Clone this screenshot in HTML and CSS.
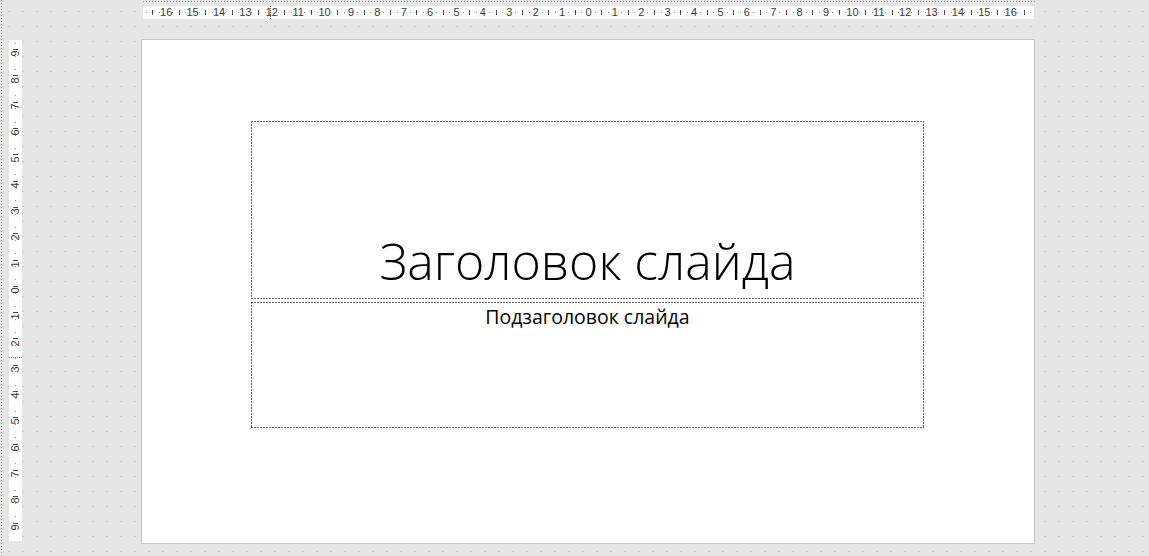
FILE: index.html
```html
<!DOCTYPE html>
<html lang="ru">
<head>
<meta charset="utf-8">
<title>Слайд</title>
<link rel="stylesheet" href="styles.css">
</head>
<body>
<div class="app">
  <div class="top-row">
    <div class="hruler">
      <div class="ruler-nums">
        <span>16</span><span>15</span><span>14</span><span>13</span><span>12</span><span>11</span><span>10</span><span>9</span><span>8</span><span>7</span><span>6</span><span>5</span><span>4</span><span>3</span><span>2</span><span>1</span><span>0</span><span>1</span><span>2</span><span>3</span><span>4</span><span>5</span><span>6</span><span>7</span><span>8</span><span>9</span><span>10</span><span>11</span><span>12</span><span>13</span><span>14</span><span>15</span><span>16</span>
      </div>
      <div class="hmarker"></div>
    </div>
  </div>
  <div class="main-row">
    <div class="vruler">
      <div class="ruler-nums vnums">
        <span><i>9</i></span><span><i>8</i></span><span><i>7</i></span><span><i>6</i></span><span><i>5</i></span><span><i>4</i></span><span><i>3</i></span><span><i>2</i></span><span><i>1</i></span><span><i>0</i></span><span><i>1</i></span><span><i>2</i></span><span><i>3</i></span><span><i>4</i></span><span><i>5</i></span><span><i>6</i></span><span><i>7</i></span><span><i>8</i></span><span><i>9</i></span>
      </div>
      <div class="vmarker"></div>
    </div>
    <div class="slide">
      <div class="ph ph-title"><h1 class="title">Заголовок слайда</h1></div>
      <div class="ph ph-sub"><p class="subtitle">Подзаголовок слайда</p></div>
    </div>
  </div>
</div>
</body>
</html>
```

FILE: styles.css
```css
html, body {
  margin: 0;
  padding: 0;
}
body {
  width: 1149px;
  height: 556px;
  overflow: hidden;
  background-color: #e6e6e6;
  background-image: radial-gradient(circle, #cbcbcb 0.6px, transparent 1px);
  background-size: 14px 15px;
  background-position: 2px 4px;
  font-family: "Liberation Sans", Arial, sans-serif;
}
.app {
  position: relative;
  width: 1149px;
  height: 556px;
  display: flex;
  flex-direction: column;
  background-image:
    repeating-linear-gradient(to right, #9a9a9a 0 1px, transparent 1px 3px),
    repeating-linear-gradient(to bottom, #9a9a9a 0 1px, transparent 1px 3px);
  background-size: 892px 1px, 1px 556px;
  background-position: 143px 1px, 1px 0;
  background-repeat: no-repeat;
}
.top-row {
  height: 39px;
  display: flex;
  flex: none;
}
.hruler {
  position: relative;
  margin: 6px 0 0 143px;
  width: 891px;
  height: 13px;
  background-color: #fff;
  overflow: hidden;
  background-image:
    repeating-linear-gradient(to right, transparent 0 9.4px, #4a4a4a 9.4px 10.4px, transparent 10.4px 26.4px),
    repeating-linear-gradient(to right, transparent 0 2.8px, #8a8a8a 2.8px 3.8px, transparent 3.8px 16px, #8a8a8a 16px 17px, transparent 17px 26.4px);
  background-size: 100% 5px, 100% 1px;
  background-position: 0 4px, 0 6px;
  background-repeat: no-repeat;
}
.ruler-nums {
  display: flex;
  justify-content: center;
  height: 100%;
  font-size: 11px;
  line-height: 13px;
  color: #3a3a3a;
}
.ruler-nums span {
  flex: none;
  width: 26.4px;
  display: flex;
  justify-content: center;
}
.hmarker {
  position: absolute;
  left: 127px;
  top: 0;
  width: 1px;
  height: 13px;
  background: repeating-linear-gradient(to bottom, #777 0 1px, transparent 1px 2px);
}
.main-row {
  display: flex;
  align-items: flex-start;
}
.vruler {
  position: relative;
  flex: none;
  margin: 1px 0 0 9px;
  width: 13px;
  height: 501px;
  background-color: #fff;
  overflow: hidden;
  background-image:
    repeating-linear-gradient(to bottom, transparent 0 9.2px, #4a4a4a 9.2px 10.2px, transparent 10.2px 26.3px),
    repeating-linear-gradient(to bottom, transparent 0 2.7px, #8a8a8a 2.7px 3.7px, transparent 3.7px 15.9px, #8a8a8a 15.9px 16.9px, transparent 16.9px 26.3px);
  background-size: 5px 100%, 1px 100%;
  background-position: 4px 0, 6px 0;
  background-repeat: no-repeat;
}
.vnums {
  flex-direction: column;
  align-items: center;
  justify-content: center;
}
.vnums span {
  width: 13px;
  height: 26.3px;
  align-items: center;
}
.vnums i {
  font-style: normal;
  display: block;
  transform: rotate(-90deg);
  line-height: 11px;
}
.vmarker {
  position: absolute;
  left: 0;
  top: 317px;
  width: 13px;
  height: 1px;
  background: repeating-linear-gradient(to right, #777 0 1px, transparent 1px 2px);
}
.slide {
  flex: none;
  margin-left: 119px;
  width: 892px;
  height: 503px;
  border: 1px solid #c6c6c6;
  background: #fff;
  display: flex;
  flex-direction: column;
}
.ph {
  flex: none;
  margin-left: 109px;
  width: 673px;
  box-sizing: border-box;
  background:
    repeating-linear-gradient(to right, #6c6c6c 0 2px, transparent 2px 3px) left top / 100% 1px no-repeat,
    repeating-linear-gradient(to right, #6c6c6c 0 2px, transparent 2px 3px) left bottom / 100% 1px no-repeat,
    repeating-linear-gradient(to bottom, #6c6c6c 0 2px, transparent 2px 3px) left top / 1px 100% no-repeat,
    repeating-linear-gradient(to bottom, #6c6c6c 0 2px, transparent 2px 3px) right top / 1px 100% no-repeat;
  display: flex;
  flex-direction: column;
  align-items: center;
}
.ph-title {
  margin-top: 81px;
  height: 178px;
  justify-content: flex-end;
}
.ph-sub {
  margin-top: 3px;
  height: 126px;
  justify-content: flex-start;
}
.title {
  margin: 0 0 7px;
  font-family: "Open Sans", "Noto Sans", sans-serif;
  font-weight: 300;
  font-size: 50px;
  line-height: 62px;
  color: #000;
}
.subtitle {
  margin: 1px 0 0;
  font-family: "Open Sans", "Noto Sans", sans-serif;
  font-weight: 400;
  font-size: 19.5px;
  line-height: 28px;
  color: #000;
}
```
